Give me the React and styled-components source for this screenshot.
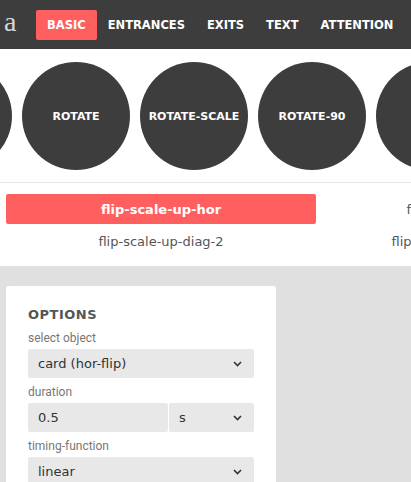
import React from 'react';
import styled, { createGlobalStyle } from 'styled-components';

const GlobalStyle = createGlobalStyle`
    html, body {
        margin: 0;
        padding: 0;
        background: #e0e0e0;
        overflow: hidden;
    }
    body {
        font-family: "DejaVu Sans", sans-serif;
    }
`;

const Header = styled.div`
    height: 49px;
    background-color: #3d3d3d;
    display: flex;
    align-items: center;
    padding-left: 4px;
    overflow: hidden;
`;

const Logo = styled.div`
    flex: 0 0 32px;
    font-family: "Liberation Serif", serif;
    font-size: 28px;
    line-height: 1;
    color: #d8d8d8;
    margin-top: -6px;
`;

const Tab = styled.div`
    flex-shrink: 0;
    height: 30px;
    padding: 0 11px;
    display: flex;
    align-items: center;
    border-radius: 2px;
    font-size: 11.5px;
    font-weight: 700;
    color: #fff;
    white-space: nowrap;
    background-color: ${({ active }) => (active ? '#ff5f5f' : 'transparent')};
`;

const Strip = styled.div`
    height: 133px;
    background: #fff;
    border-bottom: 1px solid #e5e5e5;
    overflow: hidden;
`;

const StripInner = styled.div`
    display: flex;
    gap: 10px;
    padding-top: 13px;
    margin-left: -96px;
`;

const Circle = styled.div`
    flex: 0 0 108px;
    height: 108px;
    border-radius: 50%;
    background-color: #3d3d3d;
    display: flex;
    align-items: center;
    justify-content: center;
    color: #fff;
    font-size: 11px;
    font-weight: 700;
    white-space: nowrap;
`;

const List = styled.div`
    background: #fff;
    height: 83px;
    overflow: hidden;
    padding: 11px 0 0 6px;
    box-sizing: border-box;
`;

const ListGrid = styled.div`
    display: grid;
    grid-template-columns: 310px 310px;
    grid-auto-rows: 30px;
    column-gap: 10px;
    row-gap: 2px;
    width: 640px;
`;

const Item = styled.div`
    display: flex;
    align-items: center;
    justify-content: center;
    border-radius: 2px;
    font-size: 13px;
    white-space: nowrap;
    font-weight: ${({ active }) => (active ? 700 : 400)};
    color: ${({ active }) => (active ? '#fff' : '#555')};
    background-color: ${({ active }) => (active ? '#ff5f5f' : 'transparent')};
`;

const Body = styled.div`
    padding: 20px 6px 0;
`;

const Card = styled.div`
    width: 270px;
    height: 200px;
    background: #fff;
    border-radius: 3px;
    padding: 21px 22px 0;
    box-sizing: border-box;
`;

const Title = styled.div`
    font-size: 13px;
    font-weight: 700;
    letter-spacing: 0.5px;
    color: #555;
    margin-bottom: 9px;
`;

const Label = styled.div`
    font-family: Roboto, sans-serif;
    font-size: 12px;
    color: #777;
    height: 15px;
    line-height: 15px;
    margin-bottom: 3px;
`;

const Row = styled.div`
    display: flex;
    gap: 1px;
    margin-bottom: 7px;
`;

const Field = styled.div`
    box-sizing: border-box;
    flex: ${({ width }) => (width ? `0 0 ${width}px` : '1 1 0')};
    height: 29px;
    background: #e8e8e8;
    border-radius: 2px;
    display: flex;
    align-items: center;
    justify-content: space-between;
    padding: 0 12px 0 10px;
    font-size: 13px;
    color: #333;
`;

const Chevron = () => (
    <svg width="9" height="6" viewBox="0 0 9 6">
        <path d="M1 1 L4.5 4.5 L8 1" fill="none" stroke="#333" strokeWidth="1.6" />
    </svg>
);

const tabs = ['BASIC', 'ENTRANCES', 'EXITS', 'TEXT', 'ATTENTION'];
const circles = ['FLIP', 'ROTATE', 'ROTATE-SCALE', 'ROTATE-90', 'FLIP'];

function App() {
    return (
        <>
            <GlobalStyle />
            <Header>
                <Logo>a</Logo>
                {tabs.map((t, i) => (
                    <Tab key={t} active={i === 0}>{t}</Tab>
                ))}
            </Header>
            <Strip>
                <StripInner>
                    {circles.map((c, i) => (
                        <Circle key={i}>{c}</Circle>
                    ))}
                </StripInner>
            </Strip>
            <List>
                <ListGrid>
                    <Item active>flip-scale-up-hor</Item>
                    <Item>flip-scale-down-hor-left</Item>
                    <Item>flip-scale-up-diag-2</Item>
                    <Item>flip-scale-down-diag-2-right</Item>
                </ListGrid>
            </List>
            <Body>
                <Card>
                    <Title>OPTIONS</Title>
                    <Label>select object</Label>
                    <Row>
                        <Field>card (hor-flip)<Chevron /></Field>
                    </Row>
                    <Label>duration</Label>
                    <Row>
                        <Field width={140}>0.5</Field>
                        <Field>s<Chevron /></Field>
                    </Row>
                    <Label>timing-function</Label>
                    <Row>
                        <Field>linear<Chevron /></Field>
                    </Row>
                </Card>
            </Body>
        </>
    );
}

export default App;
